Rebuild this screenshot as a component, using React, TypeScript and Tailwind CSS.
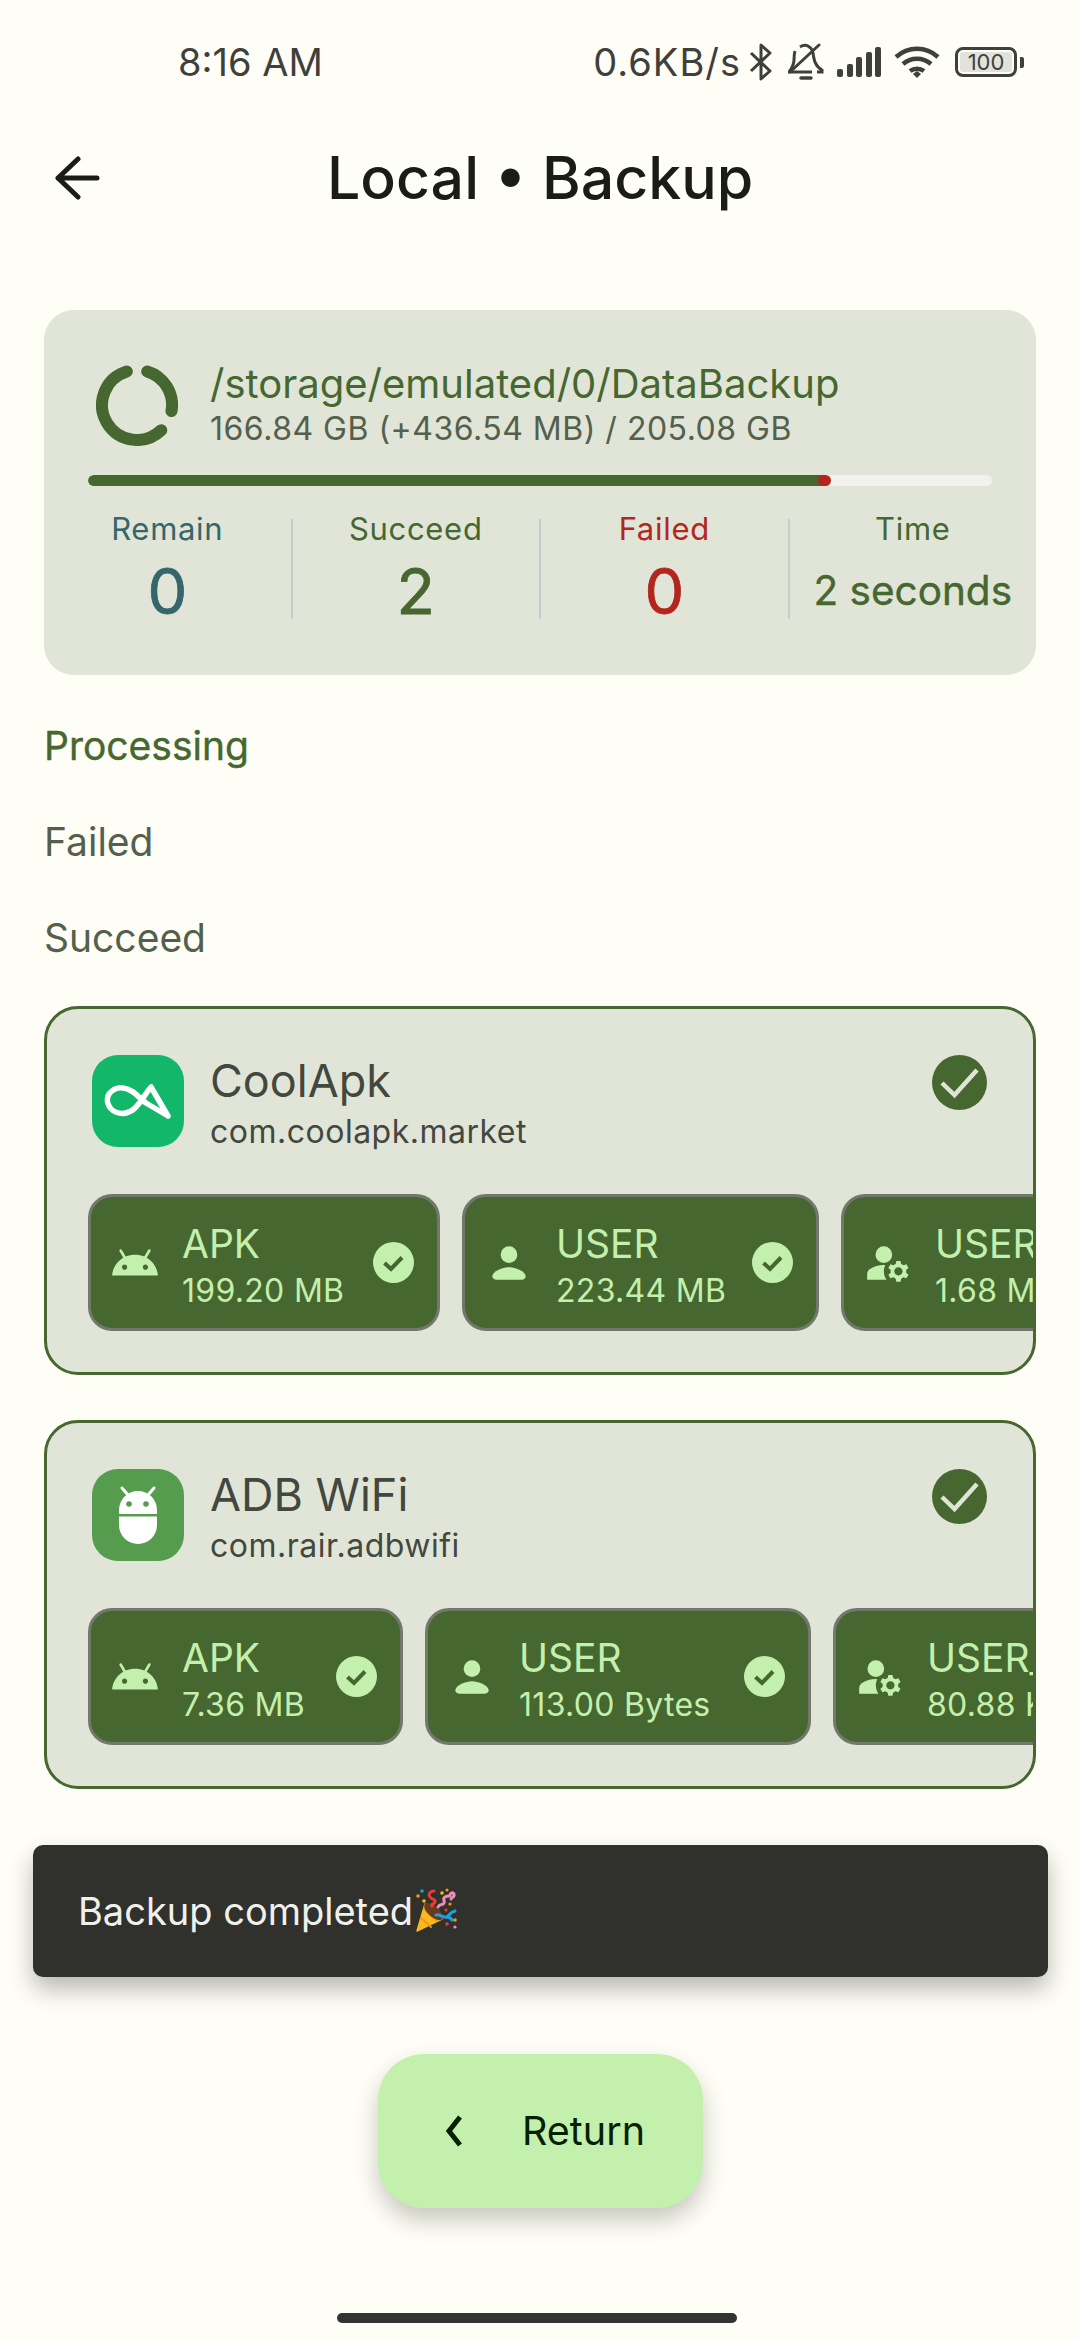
import type { ReactNode } from "react"

const font = "font-['Inter','Noto_Sans',sans-serif]"

function AndroidIcon() {
    return (
        <svg viewBox="0 0 24 24" className="size-[50px] shrink-0 fill-[#c3f0ad]">
            <path d="M17.6 9.48l1.84-3.18c.16-.31.04-.69-.26-.85-.29-.15-.65-.06-.83.22l-1.88 3.24c-2.86-1.21-6.08-1.21-8.94 0L5.65 5.67c-.19-.29-.58-.38-.87-.2-.28.18-.37.54-.22.83L6.4 9.48C3.3 11.25 1.28 14.44 1 18h22c-.28-3.56-2.3-6.75-5.4-8.52zM7 15.25c-.69 0-1.25-.56-1.25-1.25s.56-1.25 1.25-1.25 1.25.56 1.25 1.25-.56 1.25-1.25 1.25zm10 0c-.69 0-1.25-.56-1.25-1.25s.56-1.25 1.25-1.25 1.25.56 1.25 1.25-.56 1.25-1.25 1.25z" />
        </svg>
    )
}

function PersonIcon() {
    return (
        <svg viewBox="0 0 24 24" className="size-[50px] shrink-0 fill-[#c3f0ad]">
            <circle cx="12" cy="8" r="4" />
            <path d="M6 20h12c1.1 0 2-.5 2-1.5 0-2.7-5.3-4.5-8-4.5s-8 1.8-8 4.5C4 19.5 4.9 20 6 20z" />
        </svg>
    )
}

function ManageIcon() {
    return (
        <svg viewBox="0 0 24 24" className="size-[50px] shrink-0 fill-[#c3f0ad]">
            <circle cx="10" cy="8" r="4" />
            <path d="M10.67 13.02C10.45 13.01 10.23 13 10 13c-2.42 0-4.68.67-6.61 1.82C2.51 15.34 2 16.32 2 17.35V20h9.26c-.79-1.13-1.26-2.51-1.26-4 0-1.07.25-2.07.67-2.98z" />
            <path d="M20.75 16c0-.22-.03-.42-.06-.63l1.14-1.01-1-1.73-1.45.49c-.32-.27-.68-.48-1.08-.63L18 11h-2l-.3 1.49c-.4.15-.76.36-1.08.63l-1.45-.49-1 1.73 1.14 1.01c-.03.21-.06.41-.06.63s.03.42.06.63l-1.14 1.01 1 1.73 1.45-.49c.32.27.68.48 1.08.63L16 21h2l.3-1.49c.4-.15.76-.36 1.08-.63l1.45.49 1-1.73-1.14-1.01c.03-.21.06-.41.06-.63zM17 18c-1.1 0-2-.9-2-2s.9-2 2-2 2 .9 2 2-.9 2-2 2z" />
        </svg>
    )
}

function ChipCheck() {
    return (
        <svg viewBox="0 0 41 41" className="size-[41px] shrink-0">
            <circle cx="20.5" cy="20.5" r="20.5" fill="#c3f0ad" />
            <path d="M11.5 21l6.5 6 11-11.5" fill="none" stroke="#466730" strokeWidth="4" />
        </svg>
    )
}

function BigCheck() {
    return (
        <svg viewBox="0 0 55 55" className="size-[55px] shrink-0">
            <circle cx="27.5" cy="27.5" r="27.5" fill="#466730" />
            <path d="M10 28l12.5 12L45 15" fill="none" stroke="#dfe4d7" strokeWidth="4.5" />
        </svg>
    )
}

function CoolApkLogo() {
    return (
        <div className="size-[92px] shrink-0 rounded-[26px] bg-[#13b76a]">
            <svg viewBox="0 0 92 92" className="size-[92px]">
                <path
                    d="M76 61 L59 32 C52 40 47 52 39 56 C30 61 18 58 15.5 47 C14 37 24 32 31 33 C40 34 45 40 49 44 L54 48 L76 61"
                    fill="none"
                    stroke="#fff"
                    strokeWidth="5.5"
                    strokeLinecap="round"
                    strokeLinejoin="round"
                />
            </svg>
        </div>
    )
}

function AdbLogo() {
    return (
        <div className="size-[92px] shrink-0 rounded-[26px] bg-[#569c4e]">
            <svg viewBox="0 0 92 92" className="size-[92px]">
                <path d="M30 19l6 7M62 19l-6 7" stroke="#fff" strokeWidth="3" strokeLinecap="round" />
                <path d="M27 45V41a19 19 0 0 1 38 0v4z" fill="#fff" />
                <path d="M27 47.5h38V56a19 19 0 0 1-38 0z" fill="#fff" />
                <circle cx="37" cy="35" r="2.8" fill="#569c4e" />
                <circle cx="54" cy="35" r="2.8" fill="#569c4e" />
            </svg>
        </div>
    )
}

function PartyPopper() {
    return (
        <svg viewBox="0 0 46 46" className="size-[46px] shrink-0" fill="none" strokeLinecap="round">
            <path d="M4 43L12 16l17 15z" fill="#fbb81f" stroke="#fbb81f" strokeWidth="1.5" strokeLinejoin="round" />
            <path d="M8 30l10 9M11 21l13 12" stroke="#ee9a12" strokeWidth="2" />
            <ellipse cx="20.5" cy="23.5" rx="11.5" ry="5.5" transform="rotate(42 20.5 23.5)" fill="#6b3a1e" />
            <path d="M21 3c-4 0-6 3-4 6 2 3 6 2 5 5-1 3-4 1-3 4" stroke="#e53d3d" strokeWidth="3" />
            <path d="M25 19c2-4 5-1 6-4 1-3-2-4 1-6 3-2 5 0 5-2 0-2 3-3 4-1 1 3-2 3-3 5" stroke="#ef8db6" strokeWidth="3" />
            <path d="M23 27c4-2 7 4 11 2 3-2 3-5 8-6M33 29c2 0 5 1 6 3" stroke="#1da1e6" strokeWidth="3" />
            <circle cx="9" cy="3" r="1.8" fill="#1da1e6" />
            <circle cx="5" cy="8" r="1.8" fill="#ee9a12" />
            <circle cx="11" cy="13" r="1.8" fill="#fbb81f" />
            <circle cx="29" cy="5" r="1.8" fill="#fbb81f" />
            <circle cx="34" cy="2" r="1.6" fill="#ee9a12" />
            <circle cx="33" cy="22" r="1.6" fill="#e53d3d" />
            <circle cx="37" cy="16" r="1.6" fill="#ee9a12" />
            <circle cx="42" cy="32" r="1.8" fill="#ee9a12" />
            <circle cx="34" cy="36" r="1.8" fill="#e53d3d" />
            <circle cx="42" cy="39" r="1.6" fill="#ef8db6" />
        </svg>
    )
}

function StatusIcons() {
    return (
        <div className="flex items-center">
            <svg viewBox="0 0 24 38" className="ml-[8px] h-[38px] w-[24px]" fill="none" stroke="#3f403c" strokeWidth="3">
                <path d="M2 10l19 18-9 8V2l9 8L2 28" strokeLinejoin="round" />
            </svg>
            <svg viewBox="0 0 36 38" className="ml-[15px] h-[38px] w-[36px]" fill="none" stroke="#3f403c" strokeWidth="3">
                <path d="M7 8c-1 3-1 6-1 9 0 5-2 8-5 12h23" />
                <path d="M12 4c6-4 12 0 13 6 1 7 2 13 9 17v2h-5" />
                <path d="M2 29L31 2" strokeLinecap="round" />
                <path d="M13 35h10" strokeWidth="3.5" strokeLinecap="round" />
            </svg>
            <div className="ml-[13px] flex h-[30px] items-end gap-[3.5px]">
                <div className="h-[8px] w-[6px] rounded-[2px] bg-[#3f403c]" />
                <div className="h-[13px] w-[6px] rounded-[2px] bg-[#3f403c]" />
                <div className="h-[20px] w-[6px] rounded-[2px] bg-[#3f403c]" />
                <div className="h-[25px] w-[6px] rounded-[2px] bg-[#3f403c]" />
                <div className="h-[30px] w-[6px] rounded-[2px] bg-[#3f403c]" />
            </div>
            <svg viewBox="0 0 46 32" className="ml-[13px] h-[32px] w-[46px]" fill="none" stroke="#3f403c" strokeWidth="4.5">
                <path d="M2 11c12-11 30-11 42 0" />
                <path d="M9 18c8-7 20-7 28 0" />
                <path d="M16 25c4-3 10-3 14 0" />
                <path d="M19 28l4-3 4 3-4 4z" fill="#3f403c" stroke="none" />
            </svg>
            <div className="ml-[15px] flex h-[30px] w-[62px] items-center justify-center rounded-[8px] border-[3px] border-[#3f403c] p-[2px]">
                <div className="flex h-full w-full items-center justify-center rounded-[3px] bg-[#e1e2dc] text-[22px] leading-none text-[#3f403c]">
                    100
                </div>
            </div>
            <div className="ml-[3px] h-[11px] w-[4px] rounded-r-[2px] bg-[#3f403c]" />
        </div>
    )
}

function Stat({ label, value, className, small }: { label: string; value: string; className: string; small?: boolean }) {
    return (
        <div className={`flex h-[116px] flex-col items-center ${className}`}>
            <div className="text-[31px] leading-[44px] tracking-[0.7px]">{label}</div>
            <div className={small ? "mt-[5px] text-[40.5px] leading-[70px] [-webkit-text-stroke:0.4px]" : "mt-[4px] text-[63px] leading-[72px] [-webkit-text-stroke:0.8px]"}>{value}</div>
        </div>
    )
}

function Divider() {
    return <div className="mt-[12px] h-[100px] w-[2px] shrink-0 bg-[#c9c9d0]" />
}

function Chip({ icon, title, size, width }: { icon: ReactNode; title: string; size: string; width: string }) {
    return (
        <div className={`flex h-[137px] shrink-0 items-center rounded-[24px] border-[3px] border-[#72796c] bg-[#466730] pl-[19px] text-[#c3f0ad] ${width}`}>
            {icon}
            <div className="ml-[22px] flex flex-1 flex-col">
                <div className="text-[39px] leading-[56px]">{title}</div>
                <div className="text-[32px] leading-[38px] tracking-[0.3px] whitespace-nowrap">{size}</div>
            </div>
            <div className="mr-[23px]">
                <ChipCheck />
            </div>
        </div>
    )
}

function AppCard({ logo, name, pkg, children }: { logo: ReactNode; name: string; pkg: string; children: ReactNode }) {
    return (
        <div className="mx-[44px] h-[369px] overflow-hidden rounded-[34px] border-[3px] border-[#466730] bg-[#e0e5d8]">
            <div className="flex items-center pl-[45px] pr-[46px] pt-[40px]">
                {logo}
                <div className="ml-[26px] flex flex-1 flex-col text-[#43483f]">
                    <div className="text-[45px] leading-[63px]">{name}</div>
                    <div className="text-[32px] leading-[40px] tracking-[0.5px]">{pkg}</div>
                </div>
                <div className="-mt-[36px]">
                    <BigCheck />
                </div>
            </div>
            <div className="mt-[42px] flex gap-[22px] pl-[41px]">{children}</div>
        </div>
    )
}

export default function App() {
    return (
        <div className={`relative h-[2340px] w-[1080px] overflow-hidden bg-[#fefef6] ${font}`}>
            {/* Status bar */}
            <div className="flex h-[124px] items-center justify-between pl-[178px] pr-[56px] text-[38px] text-[#3f403c]">
                <span>8:16 AM</span>
                <div className="flex items-center">
                    <span className="tracking-[1px]">0.6KB/s</span>
                    <StatusIcons />
                </div>
            </div>

            {/* Top bar */}
            <div className="flex h-[108px] items-center pl-[55px]">
                <svg viewBox="0 0 45 44" className="h-[44px] w-[45px] shrink-0" fill="none" stroke="#1b1c18" strokeWidth="5" strokeLinecap="round" strokeLinejoin="round">
                    <path d="M23 3L3 22l20 19M3 22h39" />
                </svg>
                <div className="ml-[227px] text-[59px] font-medium text-[#1b1c18]">Local • Backup</div>
            </div>

            {/* Summary */}
            <div className="mx-[44px] mt-[78px] h-[365px] rounded-[30px] bg-[#e0e5d8]">
                <div className="flex items-center pl-[52px] pt-[50px]">
                    <svg viewBox="0 0 82 82" className="size-[82px] shrink-0" fill="none" stroke="#466730" strokeWidth="12" strokeLinecap="round">
                        <path d="M51.2 7.5A35 35 0 0 1 75.5 47.1" />
                        <path d="M65.3 66.2A35 35 0 1 1 30.8 7.5" />
                    </svg>
                    <div className="ml-[32px] flex flex-col">
                        <div className="text-[40px] leading-[48px] text-[#466730]">/storage/emulated/0/DataBackup</div>
                        <div className="text-[32px] leading-[42px] tracking-[0.5px] text-[#54604c]">166.84 GB (+436.54 MB) / 205.08 GB</div>
                    </div>
                </div>
                <div className="mx-[44px] mt-[25px] flex h-[11px] overflow-hidden rounded-full bg-[#f1f2ec]">
                    <div className="h-full w-[736px] rounded-l-full bg-[#466730]" />
                    <div className="-ml-[6px] h-full w-[13px] rounded-full bg-[#b3261e]" />
                </div>
                <div className="mt-[21px] flex">
                    <div className="flex-1"><Stat label="Remain" value="0" className="text-[#36656b]" /></div>
                    <Divider />
                    <div className="flex-1"><Stat label="Succeed" value="2" className="text-[#466730]" /></div>
                    <Divider />
                    <div className="flex-1"><Stat label="Failed" value="0" className="text-[#b3261e]" /></div>
                    <Divider />
                    <div className="flex-1"><Stat label="Time" value="2 seconds" className="text-[#466730]" small /></div>
                </div>
            </div>

            {/* Sections */}
            <div className="mt-[23px] flex h-[96px] items-center pl-[44px] text-[39px] text-[#466730] [-webkit-text-stroke:0.4px]">Processing</div>
            <div className="flex h-[96px] items-center pl-[44px] text-[39px] text-[#54604c]">Failed</div>
            <div className="flex h-[96px] items-center pl-[44px] text-[39px] text-[#54604c]">Succeed</div>

            <div className="mt-[20px] flex flex-col gap-[45px]">
                <AppCard logo={<CoolApkLogo />} name="CoolApk" pkg="com.coolapk.market">
                    <Chip icon={<AndroidIcon />} title="APK" size="199.20 MB" width="w-[352px]" />
                    <Chip icon={<PersonIcon />} title="USER" size="223.44 MB" width="w-[357px]" />
                    <Chip icon={<ManageIcon />} title="USER_DE" size="1.68 MB" width="w-[356px]" />
                </AppCard>
                <AppCard logo={<AdbLogo />} name="ADB WiFi" pkg="com.rair.adbwifi">
                    <Chip icon={<AndroidIcon />} title="APK" size="7.36 MB" width="w-[315px]" />
                    <Chip icon={<PersonIcon />} title="USER" size="113.00 Bytes" width="w-[386px]" />
                    <Chip icon={<ManageIcon />} title="USER_DE" size="80.88 KB" width="w-[356px]" />
                </AppCard>
            </div>

            {/* Snackbar */}
            <div className="absolute left-[33px] top-[1845px] flex h-[132px] w-[1015px] items-center rounded-[10px] bg-[#30312c] pl-[45px] text-[38px] text-[#f1f1ea] shadow-[0_12px_24px_rgba(0,0,0,0.28)]">
                <span>Backup completed</span>
                <PartyPopper />
            </div>

            {/* Return button */}
            <div className="absolute left-[378px] top-[2054px] flex h-[154px] w-[325px] items-center rounded-[46px] bg-[#c3f0ad] pl-[66px] text-[39.5px] text-[#072100] shadow-[0_12px_24px_rgba(0,0,0,0.22)]">
                <svg viewBox="0 0 20 34" className="h-[34px] w-[20px]" fill="none" stroke="#072100" strokeWidth="5">
                    <path d="M16 3L5 17l11 14" />
                </svg>
                <span className="ml-[58px] pt-[2px]">Return</span>
            </div>

            {/* Home indicator */}
            <div className="absolute left-[337px] top-[2313px] h-[10px] w-[400px] rounded-full bg-[#333333]" />
        </div>
    )
}
